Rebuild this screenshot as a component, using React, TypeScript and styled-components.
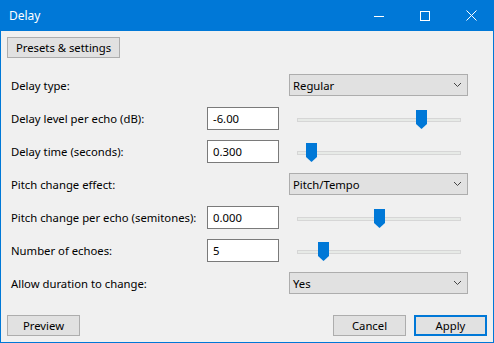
import styled, { createGlobalStyle } from "styled-components";

const GlobalStyle = createGlobalStyle`
  html, body {
    margin: 0;
    padding: 0;
    background: #ffffff;
  }
  body {
    font-family: "Noto Sans", "Open Sans", sans-serif;
    font-size: 11.3px;
    color: #000000;
  }
`;

const Window = styled.div`
  width: 494px;
  height: 343px;
  box-sizing: border-box;
  border: 1px solid #0078d7;
  border-top: none;
  background: #f0f0f0;
  display: flex;
  flex-direction: column;
`;

const TitleBar = styled.div`
  height: 31px;
  margin: 0 -1px;
  background: #0078d7;
  color: #ffffff;
  display: flex;
  align-items: center;
  padding-left: 9px;
`;

const TitleText = styled.span`
  flex: 1;
  font-size: 12px;
  margin-top: -1px;
`;

const Caption = styled.div`
  width: 46px;
  height: 31px;
  display: flex;
  align-items: center;
  justify-content: center;
`;

const Body = styled.div`
  flex: 1;
  display: flex;
  flex-direction: column;
  padding: 6px 6px 0 6px;
`;

const Button = styled.div<{ $default?: boolean }>`
  box-sizing: border-box;
  height: 21px;
  min-width: 73px;
  padding: 0 8px;
  background: #e1e1e1;
  border: ${(p) => (p.$default ? "2px solid #0078d7" : "1px solid #adadad")};
  display: flex;
  align-items: center;
  justify-content: center;
  white-space: nowrap;
`;

const TopRow = styled.div`
  display: flex;
`;

const Form = styled.div`
  display: grid;
  grid-template-columns: 186px 72px 179px;
  column-gap: 10px;
  grid-auto-rows: 23px;
  row-gap: 10px;
  margin-top: 16px;
  padding-left: 4px;
`;

const Label = styled.div`
  grid-column: 1;
  display: flex;
  align-items: center;
  white-space: nowrap;
`;

const TextBox = styled.div`
  grid-column: 2;
  box-sizing: border-box;
  background: #ffffff;
  border: 1px solid #7a7a7a;
  display: flex;
  align-items: center;
  padding-left: 5px;
`;

const Choice = styled.div`
  grid-column: 3;
  box-sizing: border-box;
  height: 22px;
  background: #e1e1e1;
  border: 1px solid #adadad;
  display: flex;
  align-items: center;
  justify-content: space-between;
  padding: 0 5px 0 3px;
`;

const SliderBox = styled.div`
  grid-column: 3;
  position: relative;
  padding: 0 7px 0 8px;
  display: flex;
  align-items: center;
`;

const Track = styled.div`
  flex: 1;
  height: 4px;
  box-sizing: border-box;
  background: #e7eae7;
  border: 1px solid #d6d6d6;
  position: relative;
  top: 1px;
`;

const Thumb = styled.svg`
  position: absolute;
  top: 3px;
  margin-left: -5px;
`;

const Footer = styled.div`
  margin-top: auto;
  margin-bottom: 6px;
  display: flex;
  gap: 8px;
`;

const Spacer = styled.div`
  flex: 1;
`;

function Chevron() {
  return (
    <svg width="9" height="6" viewBox="0 0 9 6">
      <path d="M1 1 L4.5 4.5 L8 1" stroke="#444" strokeWidth="1" fill="none" />
    </svg>
  );
}

function Slider({ pos }: { pos: number }) {
  // pos: fraction of the track
  return (
    <SliderBox>
      <Track />
      <Thumb
        width="11"
        height="19"
        viewBox="0 0 11 19"
        style={{ left: `calc(8px + (100% - 15px) * ${pos})` }}
      >
        <path d="M0 0 H11 V14 L5.5 19 L0 14 Z" fill="#0078d7" />
      </Thumb>
    </SliderBox>
  );
}

export default function App() {
  return (
    <>
      <GlobalStyle />
      <Window>
        <TitleBar>
          <TitleText>Delay</TitleText>
          <Caption>
            <svg width="10" height="10" viewBox="0 0 10 10">
              <path d="M0 5.5 H10" stroke="#fff" strokeWidth="1" />
            </svg>
          </Caption>
          <Caption>
            <svg width="10" height="10" viewBox="0 0 10 10">
              <rect x="0.5" y="0.5" width="9" height="9" stroke="#fff" fill="none" />
            </svg>
          </Caption>
          <Caption>
            <svg width="11" height="11" viewBox="0 0 11 11">
              <path d="M0.5 0.5 L10.5 10.5 M10.5 0.5 L0.5 10.5" stroke="#fff" strokeWidth="1" />
            </svg>
          </Caption>
        </TitleBar>
        <Body>
          <TopRow>
            <Button style={{ width: 113 }}>Presets &amp; settings</Button>
          </TopRow>
          <Form>
            <Label>Delay type:</Label>
            <Choice>
              <span>Regular</span>
              <Chevron />
            </Choice>

            <Label>Delay level per echo (dB):</Label>
            <TextBox>-6.00</TextBox>
            <Slider pos={0.756} />

            <Label>Delay time (seconds):</Label>
            <TextBox>0.300</TextBox>
            <Slider pos={0.085} />

            <Label>Pitch change effect:</Label>
            <Choice>
              <span>Pitch/Tempo</span>
              <Chevron />
            </Choice>

            <Label>Pitch change per echo (semitones):</Label>
            <TextBox>0.000</TextBox>
            <Slider pos={0.5} />

            <Label>Number of echoes:</Label>
            <TextBox>5</TextBox>
            <Slider pos={0.159} />

            <Label>Allow duration to change:</Label>
            <Choice>
              <span>Yes</span>
              <Chevron />
            </Choice>
          </Form>
          <Footer>
            <Button>Preview</Button>
            <Spacer />
            <Button>Cancel</Button>
            <Button $default>Apply</Button>
          </Footer>
        </Body>
      </Window>
    </>
  );
}
